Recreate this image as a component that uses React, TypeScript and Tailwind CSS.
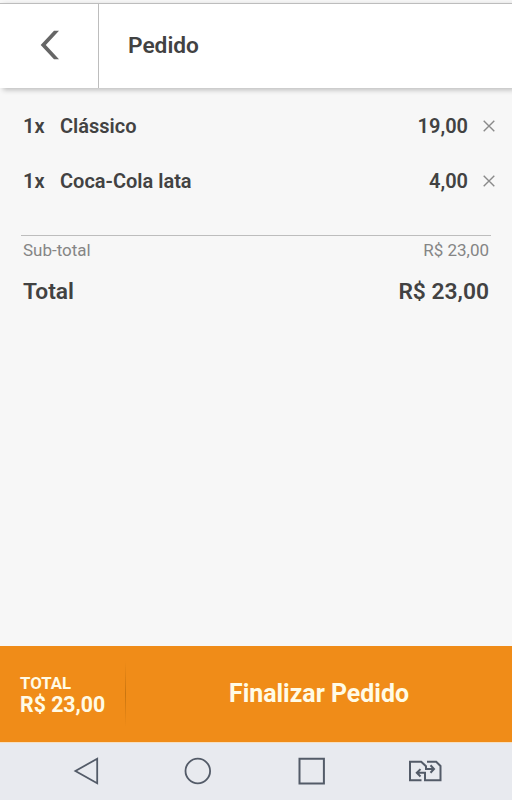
interface OrderItem {
  quantity: number;
  name: string;
  price: string;
}

const items: OrderItem[] = [
  { quantity: 1, name: "Clássico", price: "19,00" },
  { quantity: 1, name: "Coca-Cola lata", price: "4,00" },
];

const total = "R$ 23,00";

function Header() {
  return (
    <header className="z-10 flex h-[85px] shrink-0 border-t border-[#bdbdbd] bg-white shadow-[3px_2px_5px_rgba(0,0,0,0.24)]">
      <button
        aria-label="Voltar"
        className="flex w-[99px] items-center justify-center border-r border-[#bdbdbd] pb-0.5 pl-0.5"
      >
        <svg width="20" height="30" viewBox="0 0 20 30" className="fill-[#666]">
          <path d="M14 .8h5L5.8 15 19 29.2h-5L.7 15Z" />
        </svg>
      </button>
      <h1 className="flex items-center pl-[29px] text-[22.7px] leading-none font-semibold text-[#424242]">
        Pedido
      </h1>
    </header>
  );
}

function ItemRow({ item }: { item: OrderItem }) {
  return (
    <li className="flex h-[55px] items-center pr-[17px] pl-[23px] text-[20px] leading-none font-semibold text-[#424242]">
      <span className="w-[37px]">{item.quantity}x</span>
      <span className="flex-1">{item.name}</span>
      <span>{item.price}</span>
      <button aria-label="Remover" className="ml-[15px]">
        <svg
          width="12"
          height="12"
          viewBox="0 0 12 12"
          className="stroke-[#8a8a8a] stroke-[1.4]"
        >
          <path d="M.7.7l10.6 10.6M11.3.7L.7 11.3" />
        </svg>
      </button>
    </li>
  );
}

function Summary() {
  return (
    <section className="mr-[21px] ml-[21px] border-t border-[#bdbdbd] pr-0.5 pl-0.5">
      <div className="flex h-7 items-center justify-between text-[17px] leading-none text-[#858585]">
        <span>Sub-total</span>
        <span>{total}</span>
      </div>
      <div className="flex h-14 items-center justify-between text-[22.8px] leading-none font-semibold text-[#424242]">
        <span>Total</span>
        <span>{total}</span>
      </div>
    </section>
  );
}

function CheckoutBar() {
  return (
    <footer className="flex h-24 shrink-0 items-center bg-[#f08c18] text-[#fffbe6]">
      <div className="w-[125px] pl-5 font-bold">
        <div className="text-[16.8px] leading-[21px]">TOTAL</div>
        <div className="text-[21.3px] leading-[22px]">{total}</div>
      </div>
      <div className="h-[66px] w-px bg-linear-to-b from-transparent via-[#c9750f] to-transparent" />
      <button className="flex-1 text-[24.9px] leading-none font-bold">
        Finalizar Pedido
      </button>
    </footer>
  );
}

// Android system navigation buttons
function NavigationBar() {
  return (
    <nav className="flex h-[58px] shrink-0 items-center justify-between border-t border-[#f6dfc0] bg-[#e8eaef] pr-[70px] pb-px pl-[73px]">
      <svg width="28" height="28" viewBox="0 0 28 28" className="fill-none stroke-[#535b68] stroke-[1.8]">
        <path d="M24.2 1.7v24.6L2.4 14Z" />
      </svg>
      <svg width="28" height="28" viewBox="0 0 28 28" className="fill-none stroke-[#535b68] stroke-[1.8]">
        <circle cx="13.8" cy="14" r="12.3" />
      </svg>
      <svg width="30" height="28" viewBox="0 0 30 28" className="fill-none stroke-[#535b68] stroke-2">
        <path d="M4.5 1.8h24.4v24.6H4.5Z" />
      </svg>
      <svg width="34" height="22" viewBox="0 0 34 22" className="fill-none stroke-[#535b68] stroke-2">
        <path d="M13.5 20.3H2V1.7h11.2l4.8 4.5V9h7.5M22.5 5.3L26 9l-3.5 3.7" />
        <path d="M19 1.7h9.2l4.3 4.3v14.3H17v-7.5H9M12.5 9.1L8.8 12.8l3.7 3.7" />
      </svg>
    </nav>
  );
}

export default function App() {
  return (
    <div className="flex h-[800px] w-[512px] flex-col bg-[#f7f7f7] pt-[3px] font-['Roboto',sans-serif]">
      <Header />
      <main className="flex-1">
        <ul className="pt-[10px] pb-[27px]">
          {items.map((item) => (
            <ItemRow key={item.name} item={item} />
          ))}
        </ul>
        <Summary />
      </main>
      <CheckoutBar />
      <NavigationBar />
    </div>
  );
}
